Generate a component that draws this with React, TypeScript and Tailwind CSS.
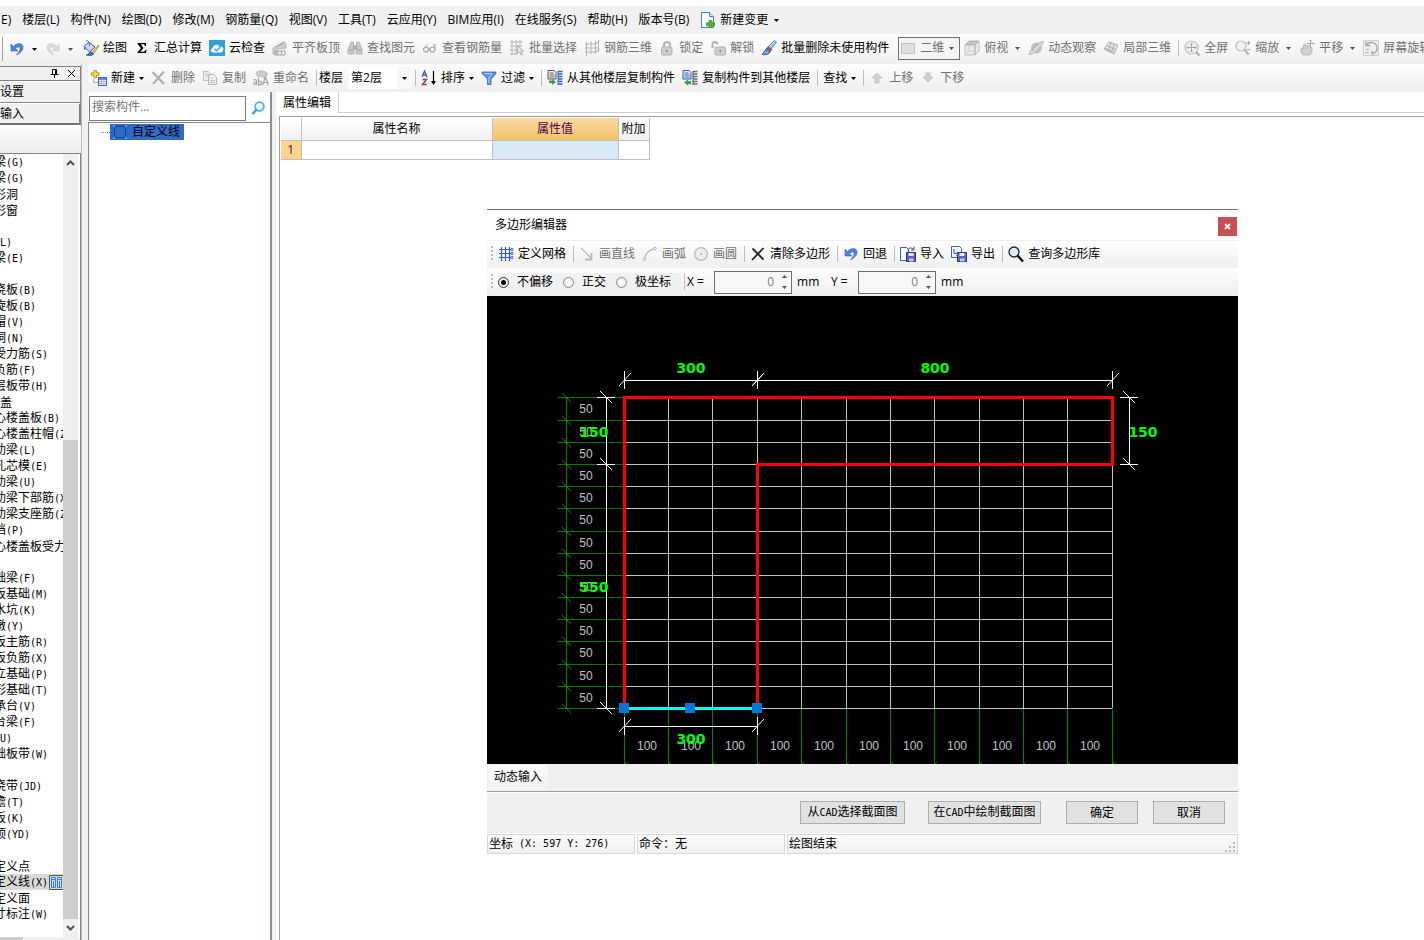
import type { ReactNode } from "react";

const UI = "font-['Open_Sans','Noto_Sans_CJK_SC',sans-serif]";

/* ---------- icons ---------- */

function Icon({ children, label }: { children: ReactNode; label?: string }) {
  return (
    <svg width="16" height="16" viewBox="0 0 16 16" fill="none" className="shrink-0" aria-hidden={!label} aria-label={label}>
      {children}
    </svg>
  );
}

function Caret({ off = false }: { off?: boolean }) {
  return (
    <svg width="5" height="3" viewBox="0 0 5 3" className="shrink-0" aria-hidden="true">
      <path d="M0 0h5L2.5 3z" fill={off ? "#505050" : "#000"} />
    </svg>
  );
}

const UndoIcon = ({ off = false }: { off?: boolean }) => (
  <Icon>
    <path d="M2 3v7h7L6.6 7.7C8.300 5.500 10.800 5.400 11 7.500c.2 2.400-1.700 4.300-3.500 6.200 4-1.600 6.800-4.500 6.500-8C13.500 1.800 8 1.500 4.500 5.400z" fill={off ? "#d4d4d4" : "#4f83dd"} stroke={off ? "#c4c4c4" : "#2f5fb8"} strokeWidth=".6" />
  </Icon>
);
const RedoIcon = () => (
  <Icon>
    <path d="M14 3v7H7l2.400-2.300C7.700 5.500 5.200 5.400 5 7.500c-.2 2.400 1.700 4.300 3.500 6.200C4.500 12.100 1.700 9.200 2 5.700 2.500 1.800 8 1.500 11.500 5.400z" fill="#dadada" stroke="#c6c6c6" strokeWidth=".6" />
  </Icon>
);
const BucketIcon = () => (
  <Icon>
    <path d="M1 6.500 6 2l6 5-5.500 5z" fill="#c9d8ec" stroke="#3c5f93" />
    <path d="M3 1c2-1 3.500 1 3.500 5" stroke="#46658f" />
    <path d="M1 7c-1 3 1 4 1.500 2L3 7z" fill="#4476b9" />
    <path d="m15.500 5-7 7.500 2 1.500 5-7z" fill="#e9c154" stroke="#9b7a24" strokeWidth=".6" />
    <path d="M8.500 12C6 12 6 14.500 3 15c3 1.200 7 .8 7.600-1.200z" fill="#2f6ec8" stroke="#1d498c" strokeWidth=".6" />
  </Icon>
);
const SigmaIcon = () => (
  <Icon>
    <path d="M3.500 3h8.500v3h-1c-.2-1.200-.7-1.700-2-1.700H6.700L9.500 8l-3.200 3.700h3c1.400 0 1.900-.6 2.200-1.900h1L12 13H3.500v-.8L6.900 8.200 3.500 3.800z" fill="#000" />
  </Icon>
);
const CloudIcon = () => (
  <Icon>
    <rect width="16" height="16" fill="#2ea0dc" />
    <path d="M4 12.500C1 12.500 1.200 8.500 3.700 8.300 4 4.500 9 3.500 10.300 6.700c3.400-.6 4.500 1.300 3.900 3.300-.4 1.700-1.400 2.500-3 2.500z" fill="#fff" />
    <path d="m5.500 8.800 2 2 4-4" stroke="#2ea0dc" strokeWidth="1.300" />
  </Icon>
);
const AlignTopIcon = () => (
  <Icon>
    <path d="M1 8 12 1.500 14 4v4L5 9v5H1z" fill="#d0d0d0" stroke="#ababab" strokeWidth=".8" />
    <path d="M3 15v-4h10v4zM6 11v4M9.500 11v4M4 7l8-4" stroke="#a4a4a4" />
  </Icon>
);
const BinocularsIcon = () => (
  <Icon>
    <path d="M4 2h2.500v3L7 14H1V9zM9.500 2H12l3 7v5H9L9.500 5z" fill="#c9c9c9" stroke="#a9a9a9" strokeWidth=".8" />
    <path d="M6.500 6h3v3h-3zM2 10h4M10 10h4" stroke="#9d9d9d" fill="#bbb" />
  </Icon>
);
const GlassesIcon = () => (
  <Icon>
    <circle cx="4" cy="9.500" r="2.500" stroke="#a2a2a2" strokeWidth="1.200" />
    <circle cx="10.500" cy="9.500" r="2.500" stroke="#a2a2a2" strokeWidth="1.200" />
    <path d="M6 9.300h2.500M2 8.500 5 5M13 9.500V4l-2 1.500" stroke="#a2a2a2" />
  </Icon>
);
const BatchSelectIcon = () => (
  <Icon>
    <path d="M1 2h13M1 6h12M1 10h7M1 14h7M3 0v15M7 0v15M11 0v6" stroke="#b8b8b8" />
    <path d="m8.500 5.500 6 5.500-2.500.3 1.500 3-1.300.7-1.500-3-2.200 1.500z" fill="#e6e6e6" stroke="#9f9f9f" strokeWidth=".8" />
  </Icon>
);
const RebarIcon = () => (
  <Icon>
    <path d="M1 4h11M1 8h14M1 12h12M2.500 2v14M7 1v13M11.500 1v13M14.500 0v12M11.500 4l4-3M11.500 12l4-3" stroke="#b3b3b3" />
  </Icon>
);
const LockIcon = ({ open = false }: { open?: boolean }) => (
  <Icon>
    <path d={open ? "M2.500 8V4.500c0-3.500 5-3.500 5 0" : "M5 8V5c0-4 6-4 6 0v3"} stroke="#b4b4b4" strokeWidth="2" />
    <rect x={open ? 5 : 2.500} y="7" width="10.500" height="8" rx="1.500" fill="#d0d0d0" stroke="#b0b0b0" />
    <path d={open ? "M10.300 9.500v3M9 11h2.600" : "M7.800 9.500v3M6.500 11h2.600"} stroke="#8d8d8d" />
  </Icon>
);
const BrushIcon = () => (
  <Icon>
    <rect width="16" height="16" fill="#fff" />
    <path d="M13.500.500 15.500 2 9.500 10 6.500 7.500z" fill="#9ed0f4" stroke="#386fae" strokeWidth=".8" />
    <path d="m7 6.500 4 3-1.500 2-4-3z" fill="#b85a55" stroke="#6d3133" strokeWidth=".5" />
    <path d="M5.500 8.500 1 14.500c4 1 7 .2 8.500-3z" fill="#3f7fd6" stroke="#264f92" strokeWidth=".7" />
    <path d="m3 13.500 3-3m-1 3.500 2.500-2.500" stroke="#c9e2ff" strokeWidth=".8" />
  </Icon>
);
const PlaneIcon = () => (
  <Icon>
    <rect x="1.500" y="3.500" width="13" height="10" fill="#dedede" stroke="#c3c3c3" />
  </Icon>
);
const CubeIcon = () => (
  <Icon>
    <path d="M1 5 5 1h10l-4 4z" fill="#c4c4c4" stroke="#a5a5a5" strokeWidth=".8" />
    <path d="M1 5h10v10H1zM11 5l4-4v10l-4 4z" fill="#e9e9e9" stroke="#b2b2b2" strokeWidth=".8" />
    <path d="M5 6v5h6M5 11l-3.500 3.500" stroke="#cfcfcf" />
  </Icon>
);
const OrbitIcon = () => (
  <Icon>
    <circle cx="8.500" cy="8" r="5.500" fill="#c2c2c2" />
    <path d="M1 14.500C1 10 11 1 15.500 1.500 15 6 5 15.500 1 14.500z" fill="#d9d9d9" stroke="#acacac" strokeWidth=".8" />
    <path d="M4 11c1-3 4-5.500 7-7" stroke="#9e9e9e" />
  </Icon>
);
const Local3dIcon = () => (
  <Icon>
    <path d="m1 9 5-7 9 3-4 9z" fill="#e2e2e2" stroke="#b0b0b0" />
    <path d="m3.500 5.500 9 4M8 3 5 12M11.500 4 8 13M2 8l9 4" stroke="#adadad" />
  </Icon>
);
const FullScreenIcon = () => (
  <Icon>
    <circle cx="7.500" cy="7.500" r="6.500" fill="#f1f1f1" stroke="#bcbcbc" strokeWidth="1.200" />
    <path d="M7.500 3v9M3 7.500h9M6 4.500l1.500-1.500L9 4.500M6 10.500 7.500 12 9 10.500M4.500 6 3 7.500 4.500 9M10.500 6 12 7.500 10.500 9" stroke="#a5a5a5" />
    <path d="m12 12 3.500 3.500" stroke="#aaa" strokeWidth="2" />
  </Icon>
);
const ZoomIcon = () => (
  <Icon>
    <circle cx="6" cy="6" r="5" fill="#f1f1f1" stroke="#bcbcbc" strokeWidth="1.200" />
    <path d="m9.500 9.500 4 5" stroke="#b4b4b4" strokeWidth="2.200" />
    <path d="M13.500 1v4M11.500 3h4M12 9.500h3.500" stroke="#a5a5a5" strokeWidth="1.200" />
  </Icon>
);
const PanIcon = () => (
  <Icon>
    <path d="M2 9c0-2 2-1 2.500-.5L4.500 5c0-1.500 2-1.500 2 0v1c2-1 6 0 6.500 2v4l-2 3H4l-2-3z" fill="#cfcfcf" stroke="#b1b1b1" strokeWidth=".8" />
    <path d="M11.500 0v7M8 3.500h7M10.500 1l1-1 1 1M14 2.500l1 1-1 1" stroke="#a9a9a9" />
  </Icon>
);
const RotateIcon = () => (
  <Icon>
    <rect x=".5" y=".5" width="15" height="15" fill="#eeeeee" stroke="#d0d0d0" />
    <path d="M3 5c3-4 10-3 11 2 .5 3.500-1.500 6-4 6.500M3 1.500V5.500h4" stroke="#a6a6a6" strokeWidth="1.400" />
    <path d="M8 12.500 10 15v-4zM3 9.500h3M2.500 12.500h3" stroke="#b3b3b3" fill="#b3b3b3" />
  </Icon>
);
const NewDocIcon = () => (
  <Icon>
    <path d="M1.500.500h8l4 4v11h-12z" fill="#fff" stroke="#3b86c6" />
    <path d="M9.500.500v4h4" fill="#cfe6f8" stroke="#3b86c6" />
    <path d="M9 8.500h3v2.300h2.500v3H12V16H9v-2.200H6.500v-3H9z" fill="#54b426" stroke="#2f8a10" strokeWidth=".7" />
  </Icon>
);
const NewIcon = () => (
  <Icon>
    <path d="M3 .500h2.500v2.300H8v2.500H5.500v2.400H3V5.300H.500V2.800H3z" fill="#f7df4b" stroke="#a58a17" strokeWidth=".8" />
    <rect x="7.500" y="7.500" width="8" height="8" fill="#fff" stroke="#3e68b0" />
    <path d="M8 8h7v2H8z" fill="#5b8de0" />
    <path d="M8 11.500h7M8 13.500h7M10.500 10v5M13 10v5" stroke="#9db9e6" />
    <path d="M2.500 9.500v3h4" stroke="#777" strokeDasharray="1 1" />
  </Icon>
);
const CrossIcon = ({ off = false }: { off?: boolean }) => (
  <Icon>
    <path d={off ? "M1.500 2 13 14M13 1.500 2 14" : "M2.500 2.500 13.500 13.500M13.500 2 2 14"} stroke={off ? "#b0b0b0" : "#222"} strokeWidth={off ? 2.2 : 1.8} />
  </Icon>
);
const CopyIcon = () => (
  <Icon>
    <path d="M1.500 1.500h5l2 2v7h-7z" fill="#eee" stroke="#bdbdbd" />
    <path d="M6.500 4.500h5l3 3v7h-8z" fill="#eee" stroke="#b4b4b4" />
    <path d="M8 8h3M8 10.500h5M8 12.500h5M3 4h3M3 6h3" stroke="#c4c4c4" />
  </Icon>
);
const RenameIcon = () => (
  <Icon>
    <path d="M3 3c3-3 9-3 12 1l-4 4-3-2-3 1z" fill="#cdcdcd" stroke="#b5b5b5" strokeWidth=".8" />
    <path d="M.500 10c2-1 3 0 3 1.500V15M3.500 12c-4 0-3.500 3 0 2.500M5.500 8v7c4 .8 4-5 0-3.500M9.500 15 12.500 7l3 8M10.500 12.500h4" stroke="#a2a2a2" strokeWidth="1.200" />
  </Icon>
);
const SortIcon = () => (
  <Icon>
    <path d="M1 7 3.500 1 6 7M2 5h3" stroke="#3c58b0" strokeWidth="1.300" />
    <path d="M1.500 9.500h4L1.500 14.500h4.300" stroke="#b03a3a" strokeWidth="1.500" />
    <path d="M12.500 1v12" stroke="#000" strokeWidth="1.200" />
    <path d="M10 11h5l-2.500 4z" fill="#000" />
  </Icon>
);
const FilterIcon = () => (
  <Icon>
    <path d="M1 2h14v1.500L10 9v5.500H6.500V9L1 3.500z" fill="#5d93e6" stroke="#2f62b8" strokeWidth=".8" />
    <path d="M3 3.500h8L8 8v5" stroke="#b9d4fa" />
  </Icon>
);
const FromFloorIcon = () => (
  <Icon>
    <path d="M1 .500h6l2 2V9H1z" fill="#ececec" stroke="#555" />
    <path d="M2.500 3h4M2.500 5h5M2.500 7h5" stroke="#666" />
    <path d="M11 1.500h4.500M11 4h4.500M11 6.500h4.500M11 9h4.500M11 11.500h4.500M11 14h4.500" stroke="#2f66bd" strokeWidth="1.500" />
    <path d="M11 1v14" stroke="#2f66bd" />
    <path d="M2 10.500v2.500h3v2l4-3-4-3v1.500z" fill="#31a548" />
  </Icon>
);
const ToFloorIcon = () => (
  <Icon>
    <path d="M1 .500h6l2 2V9H1z" fill="#e2ebfa" stroke="#2f55a8" />
    <path d="M2.500 3h4M2.500 5h5M2.500 7h5" stroke="#3765bb" />
    <path d="M11 1.500h4.500M11 4h4.500M11 6.500h4.500M11 9h4.500M11 11.500h4.500M11 14h4.500" stroke="#6a6f78" strokeWidth="1.500" />
    <path d="M11 1v14" stroke="#4c5058" />
    <path d="M9 14.500V11H6V9.500l-4 3 4 3V14z" fill="#31a548" />
  </Icon>
);
const ArrowIcon = ({ down = false }: { down?: boolean }) => (
  <Icon>
    <path d={down ? "M6 3h4v4h3l-5 5-5-5h3z" : "M6 13h4V8h3L8 3 3 8h3z"} fill="#cfcfcf" stroke="#b9b9b9" strokeWidth=".7" />
  </Icon>
);
const GridIcon = () => (
  <Icon>
    <path d="M1 3.500h12M1 7.500h12M1 11.500h12M3.500 1v14M7.500 1v14M11.500 1v14" stroke="#2f5fc0" strokeWidth="1.200" />
    <path d="M13 2.500h2v2h-2zM13 6.500h2v2h-2zM13 10.500h2v2h-2z" fill="#fff" stroke="#2f5fc0" strokeWidth=".8" />
  </Icon>
);
const LineIcon = () => (
  <Icon>
    <path d="m2 2 10 10" stroke="#b8b8b8" strokeWidth="1.300" />
    <path d="M12.500 7v6.500H6" stroke="#b8b8b8" strokeWidth="1.800" />
  </Icon>
);
const ArcIcon = () => (
  <Icon>
    <path d="M2.500 14C3 8 6 4 13 2.500" stroke="#b8b8b8" strokeWidth="1.300" />
    <circle cx="2.500" cy="13.500" r="1.300" fill="#fff" stroke="#b0b0b0" />
    <circle cx="13" cy="2.500" r="1.300" fill="#fff" stroke="#b0b0b0" />
  </Icon>
);
const CircleIcon = () => (
  <Icon>
    <circle cx="8" cy="8" r="6.300" fill="#eee" stroke="#b9b9b9" strokeWidth="1.300" />
    <circle cx="8" cy="8" r="1" fill="#aaa" />
  </Icon>
);
const Disk = ({ x, y }: { x: number; y: number }) => (
  <g transform={`translate(${x} ${y})`}>
    <path d="M.500.500h9v9h-9z" fill="#5b63c4" stroke="#2d3274" />
    <path d="M2.500 1h5v3h-5z" fill="#e6e9ff" />
    <path d="M3 6.500h4.500v3H3z" fill="#c3c7e8" />
  </g>
);
const ImportIcon = () => (
  <Icon>
    <path d="M.500 1.500h6l2 2v11h-8z" fill="#f5f9ff" stroke="#45639f" />
    <Disk x={6} y={6} />
    <path d="M8 5c0-3 3-4 5-2M11 4h3V.500" stroke="#444" />
  </Icon>
);
const ExportIcon = () => (
  <Icon>
    <path d="M.500.500h8l2 2v9h-10z" fill="#f1f5fd" stroke="#45639f" />
    <Disk x={6} y={6} />
    <path d="M3 3v4.500h4M5.500 5.500l2 2-2 2" stroke="#3c4f86" />
  </Icon>
);
const MagnifierIcon = () => (
  <Icon>
    <circle cx="6" cy="6" r="5" fill="#d6eef7" stroke="#222" strokeWidth="1.300" />
    <path d="m9.500 9.500 5.500 6" stroke="#111" strokeWidth="2.400" />
  </Icon>
);
const BlueMagnifierIcon = () => (
  <Icon label="搜索">
    <circle cx="9.500" cy="6.500" r="4.300" fill="#eaf6ff" stroke="#55aeec" strokeWidth="1.800" />
    <path d="M6.500 9.800 2.500 14" stroke="#3f95dd" strokeWidth="2.200" />
  </Icon>
);

/* ---------- controls ---------- */

function Tool({ icon, label, off = false, caret = false }: { icon?: ReactNode; label: string; off?: boolean; caret?: boolean }) {
  return (
    <button type="button" disabled={off} className={`mr-[7px] flex shrink-0 items-center gap-1 whitespace-nowrap ${off ? "text-[#707070]" : "text-black"}`}>
      {icon}
      <span>{label}</span>
      {caret && <Caret off={off} />}
    </button>
  );
}

function DropArrow({ label, off = false }: { label: string; off?: boolean }) {
  return (
    <button type="button" aria-label={label} className="mr-2 flex h-5 shrink-0 items-center">
      <Caret off={off} />
    </button>
  );
}

function Sep({ tight = false }: { tight?: boolean }) {
  return <span className={`h-4 w-px shrink-0 bg-[#bdbdbd] ${tight ? "mr-0.5" : "mr-[5px]"}`} />;
}

function Grip() {
  return <span className="mr-[5px] h-4 w-0.5 shrink-0 bg-[repeating-linear-gradient(to_bottom,#b8b8b8_0px,#b8b8b8_2px,transparent_2px,transparent_4px)]" />;
}

/** Fixed-pitch rendering: ideographs take two columns, Latin characters one. */
function Pitch({ text }: { text: string }) {
  return (
    <>
      {text.split(/([\x20-\x7e]+)/).map((part, i) =>
        i % 2 ? (
          <span key={i} className="whitespace-pre font-['DejaVu_Sans_Mono',monospace] text-[10px]">{part}</span>
        ) : (
          part
        )
      )}
    </>
  );
}

/* ---------- left navigation ---------- */

const TREE = [
  "梁(G)", "梁(G)", "形洞", "形窗", "", "(L)", "梁(E)", "", "浇板(B)", "旋板(B)", "帽(V)", "洞(N)",
  "受力筋(S)", "负筋(F)", "层板带(H)", "盖", "心楼盖板(B)", "心楼盖柱帽(Z)", "肋梁(L)", "孔芯模(E)",
  "肋梁(U)", "肋梁下部筋(X)", "肋梁支座筋(Z)", "档(P)", "心楼盖板受力筋", "", "础梁(F)", "板基础(M)",
  "水坑(K)", "墩(Y)", "板主筋(R)", "板负筋(X)", "立基础(P)", "形基础(T)", "承台(V)", "台梁(F)", "(U)",
  "础板带(W)", "", "浇带(JD)", "檐(T)", "板(K)", "顶(YD)", "", "定义点", "定义线(X)", "定义面", "寸标注(W)",
];

function Chevron({ down = false }: { down?: boolean }) {
  return (
    <svg width="9" height="6" viewBox="0 0 9 6" fill="none" aria-hidden="true">
      <path d={down ? "M1 1l3.500 3.500L8 1" : "M1 5l3.500-3.500L8 5"} stroke="#505050" strokeWidth="2" />
    </svg>
  );
}

function Navigator() {
  return (
    <aside className="flex w-[82px] shrink-0 flex-col overflow-hidden border-r border-[#b9b9b9] bg-[#f0f0f0] pt-0.5">
      <div className="flex h-[15px] shrink-0 items-center justify-end gap-2 border border-l-0 border-[#808080] pr-1">
        <button type="button" aria-label="固定">
          <svg width="9" height="9" viewBox="0 0 9 9" fill="none"><path d="M2.500 5V.500h4V5M5.500.500V5M.500 5.500h8M4.500 6v3" stroke="#000" /></svg>
        </button>
        <button type="button" aria-label="关闭">
          <svg width="9" height="9" viewBox="0 0 9 9" fill="none"><path d="M1 1l7 7M8 1 1 8" stroke="#000" /></svg>
        </button>
      </div>
      <button type="button" className="h-[22px] shrink-0 border-t border-r border-b border-t-white border-r-[#8a8a8a] border-b-[#8a8a8a] text-left">设置</button>
      <button type="button" className="h-[22px] shrink-0 border-t border-r-2 border-b-2 border-t-white border-r-[#808080] border-b-[#707070] text-left">输入</button>
      <div className="h-7 shrink-0 bg-linear-to-b from-[#fdfdfd] to-[#ececec]" />
      <div className="flex min-h-0 flex-1 flex-col border-t border-r border-[#828790] bg-white">
        <div className="flex min-h-0 flex-1">
          <ul className="min-w-0 flex-1 overflow-hidden font-['Noto_Sans_CJK_SC',sans-serif]">
            {TREE.map((t, i) => (
              <li key={i} className={`flex h-4 items-center whitespace-nowrap leading-4 ${t === "定义线(X)" ? "bg-[#d9d9d9]" : ""}`}>
                <span className={t === "盖" ? "" : "-ml-1.5"}><Pitch text={t} /></span>
                {t === "定义线(X)" && (
                  <svg width="14" height="15" viewBox="0 0 14 15" fill="none" className="ml-px shrink-0" aria-hidden="true">
                    <path d="M.500.500H14M.500.500v14H14" stroke="#555" />
                    <path d="M2.500 2.500h4v10h-4zM8.500 2.500h4v10h-4zM2.500 4.500h4M8.500 4.500h4M4.500 6v6M10.500 6v6" stroke="#2f86e0" />
                  </svg>
                )}
              </li>
            ))}
          </ul>
          <div className="mr-0.5 flex w-[15px] shrink-0 flex-col items-center bg-[#f0f0f0]">
            <div className="flex h-[18px] items-center"><Chevron /></div>
            <div className="flex w-full flex-1 flex-col pt-[268px]"><div className="flex-1 bg-[#cdcdcd]" /></div>
            <div className="flex h-[18px] items-center"><Chevron down /></div>
          </div>
        </div>
        <div className="flex h-[3px] shrink-0 bg-[#f0f0f0]"><div className="w-[23px] bg-[#cdcdcd]" /></div>
      </div>
    </aside>
  );
}

/* ---------- drawing canvas ---------- */

const GX = [137, 181, 225, 270, 314, 359, 403, 447, 492, 536, 580, 625];
const GY = [101, 124, 146, 168, 190, 212, 235, 257, 279, 301, 323, 345, 368, 390, 412];

function HDim({ x1, x2, y }: { x1: number; x2: number; y: number }) {
  return (
    <>
      <path d={`M${x1} ${y + 0.5}H${x2}M${x1 + 0.5} ${y - 9}v18M${x2 + 0.5} ${y - 9}v18`} stroke="#fff" shapeRendering="crispEdges" />
      <path d={`M${x1 - 5} ${y + 6}l12-13M${x2 - 5} ${y + 6}l12-13`} stroke="#fff" />
    </>
  );
}

function VDim({ y1, y2, x }: { y1: number; y2: number; x: number }) {
  return (
    <>
      <path d={`M${x + 0.5} ${y1}V${y2}M${x - 9} ${y1 + 0.5}h18M${x - 9} ${y2 + 0.5}h18`} stroke="#fff" shapeRendering="crispEdges" />
      <path d={`M${x - 6} ${y1 - 6}l12 12M${x - 6} ${y2 - 6}l12 12`} stroke="#fff" />
    </>
  );
}

function Drawing() {
  return (
    <svg viewBox="0 0 751 468" className="block w-full bg-black" aria-label="多边形截面">
      <g shapeRendering="crispEdges">
        {GX.map((x) => <path key={x} d={`M${x + 0.5} 101V412`} stroke="#c0c0c0" />)}
        {GY.map((y) => <path key={y} d={`M137 ${y + 0.5}H625`} stroke="#c0c0c0" />)}
        {GX.map((x) => <path key={x} d={`M${x + 0.5} 413V468`} stroke="#008000" />)}
        {GY.map((y) => <path key={y} d={`M71 ${y + 0.5}H136`} stroke="#008000" />)}
        <path d="M79.500 101V412" stroke="#008000" />
      </g>
      {GY.map((y) => <path key={y} d={`M75 ${y - 4}l9 9`} stroke="#008000" />)}
      {GX.map((x) => <path key={x} d={`M${x + 1} 468l2-2`} stroke="#008000" />)}
      <g fill="#c0c0c0" fontSize="12" fontFamily="Liberation Sans, sans-serif" textAnchor="middle">
        {GY.slice(1).map((y, i) => <text key={y} x="99" y={Math.floor((y + GY[i]) / 2) + 5}>50</text>)}
        {GX.slice(1).map((x, i) => <text key={x} x={Math.floor((x + GX[i]) / 2) + 1} y="454">100</text>)}
      </g>
      <HDim x1={137} x2={270} y={84} />
      <HDim x1={270} x2={625} y={84} />
      <HDim x1={137} x2={270} y={430} />
      <VDim x={119} y1={101} y2={168} />
      <VDim x={119} y1={168} y2={412} />
      <VDim x={642} y1={101} y2={168} />
      <g fill="#00ff00" fontSize="14" fontWeight="700" fontFamily="DejaVu Sans, sans-serif" textAnchor="middle">
        <text x="204" y="77">300</text>
        <text x="448" y="77">800</text>
        <text x="107" y="141">150</text>
        <text x="107" y="296">550</text>
        <text x="656" y="141">150</text>
        <text x="204" y="448">300</text>
      </g>
      <g shapeRendering="crispEdges">
        <path d="M137.500 412V101.500H625.500V168.500H270.500V412" fill="none" stroke="#ff0000" strokeWidth="3" />
        <path d="M137 412.500H271" stroke="#00ffff" strokeWidth="3" />
        {[132, 198, 265].map((x) => <rect key={x} x={x} y="407" width="10" height="10" fill="#0078d7" />)}
      </g>
    </svg>
  );
}

/* ---------- dialog ---------- */

function Spin({ id, label }: { id: string; label: string }) {
  return (
    <>
      <label htmlFor={id} className="mr-[7px] w-5 whitespace-nowrap">{label}</label>
      <div className="mr-[5px] flex h-[23px] w-[78px] items-center border border-[#707070] bg-[#f7f7f7]">
        <input id={id} defaultValue="0" className="min-w-0 flex-1 bg-transparent text-right text-[#808080] outline-none" />
        <div className="ml-2 mr-1 flex flex-col gap-2">
          <button type="button" aria-label={`${label} 增加`} className="block"><svg width="5" height="3" viewBox="0 0 5 3" className="block"><path d="M0 3h5L2.500 0z" fill="#555" /></svg></button>
          <button type="button" aria-label={`${label} 减少`} className="block"><svg width="5" height="3" viewBox="0 0 5 3" className="block"><path d="M0 0h5L2.500 3z" fill="#555" /></svg></button>
        </div>
      </div>
      <span className="mr-[11px] w-[23px]">mm</span>
    </>
  );
}

function PolygonDialog() {
  const bar = "bg-linear-to-b from-[#fdfdfd] to-[#efefef]";
  const cell = "flex h-5 items-center border border-[#d7d7d7] bg-linear-to-b from-[#fcfcfc] to-[#f0f0f0] pl-px";
  return (
    <div role="dialog" aria-label="多边形编辑器" className="absolute top-[209px] left-[487px] w-[751px] border-t border-[#6f7b84] bg-white">
      <div className="flex h-[31px] items-center justify-between border-b border-[#efefef] pr-px pl-2">
        <h2>多边形编辑器</h2>
        <button type="button" aria-label="关闭" className="mt-0.5 flex h-[19px] w-[19px] items-center justify-center bg-[#c75050]">
          <svg width="7" height="7" viewBox="0 0 7 7" fill="none"><path d="M1 1l5 5M6 1 1 6" stroke="#fff" strokeWidth="1.800" /></svg>
        </button>
      </div>
      <div className={`flex h-[27px] items-center pb-px pl-1 ${bar}`}>
        <Grip />
        <Tool icon={<GridIcon />} label="定义网格" />
        <Sep />
        <Tool icon={<LineIcon />} label="画直线" off />
        <Tool icon={<ArcIcon />} label="画弧" off />
        <Tool icon={<CircleIcon />} label="画圆" off />
        <Sep />
        <Tool icon={<CrossIcon />} label="清除多边形" />
        <Sep />
        <Tool icon={<UndoIcon />} label="回退" />
        <Sep />
        <Tool icon={<ImportIcon />} label="导入" />
        <Tool icon={<ExportIcon />} label="导出" />
        <Sep />
        <Tool icon={<MagnifierIcon />} label="查询多边形库" />
      </div>
      <div className={`flex h-7 items-center pl-1 ${bar}`}>
        <Grip />
        <div className="mr-[3px] flex h-[18px] items-center bg-[#f0f0f0] pr-2.5">
          {["不偏移", "正交", "极坐标"].map((t, i) => (
            <label key={t} className={`flex items-center gap-2 ${i < 2 ? "mr-2.5" : ""}`}>
              <input type="radio" name="offset" defaultChecked={i === 0} className="h-[11px] w-[11px] appearance-none rounded-full border border-[#8a8a8a] bg-white bg-clip-content p-0.5 checked:border-[#333] checked:bg-black" />
              {t}
            </label>
          ))}
        </div>
        <Sep tight />
        <Spin id="dx" label="X =" />
        <Spin id="dy" label="Y =" />
      </div>
      <Drawing />
      <div className="flex h-[27px] items-start bg-[#f0f0f0] pt-px pl-px">
        <button type="button" className="h-6 rounded-sm bg-linear-to-b from-[#fcfcfc] to-[#f2f2f2] px-1.5">动态输入</button>
      </div>
      <div className="flex h-[42px] items-center justify-end border-t border-[#a0a0a0] bg-[#f0f0f0] pr-[13px] shadow-[inset_0_1px_0_#fff]">
        <button type="button" className="mr-[23px] h-[23px] w-[105px] border border-[#adadad] bg-[#e1e1e1]"><Pitch text="从CAD选择截面图" /></button>
        <button type="button" className="mr-[25px] h-[23px] w-[113px] border border-[#adadad] bg-[#e1e1e1]"><Pitch text="在CAD中绘制截面图" /></button>
        <button type="button" className="mr-[15px] h-[23px] w-[72px] border border-[#adadad] bg-[#e1e1e1]">确定</button>
        <button type="button" className="h-[23px] w-[72px] border border-[#adadad] bg-[#e1e1e1]">取消</button>
      </div>
      <div className="flex gap-0.5 pt-px">
        <div className={`w-[148px] ${cell}`}><Pitch text="坐标 (X: 597 Y: 276)" /></div>
        <div className={`w-[148px] ${cell}`}>命令：无</div>
        <div className={`flex-1 justify-between ${cell}`}>
          绘图结束
          <svg width="12" height="12" viewBox="0 0 12 12" className="self-end" fill="#b8b8b8" aria-hidden="true"><path d="M8 1h2v2H8zM4 5h2v2H4zM8 5h2v2H8zM0 9h2v2H0zM4 9h2v2H4zM8 9h2v2H8z" /></svg>
        </div>
      </div>
    </div>
  );
}

/* ---------- page ---------- */

const MENU = ["楼层(L)", "构件(N)", "绘图(D)", "修改(M)", "钢筋量(Q)", "视图(V)", "工具(T)", "云应用(Y)", "BIM应用(I)", "在线服务(S)", "帮助(H)", "版本号(B)"];

export default function App() {
  const bar = "bg-linear-to-b from-[#fdfdfd] to-[#efefef]";
  return (
    <div className={`relative flex h-screen flex-col overflow-hidden bg-white text-[12px] leading-4 text-black ${UI}`}>
      <nav className="mt-1.5 flex h-7 shrink-0 items-center gap-[11px] whitespace-nowrap bg-[#f0f0f0] pl-px">
        <button type="button">E)</button>
        {MENU.map((m) => <button type="button" key={m}>{m}</button>)}
        <button type="button" className="flex items-center gap-1">
          <NewDocIcon />
          新建变更
          <span className="ml-0.5"><Caret /></span>
        </button>
      </nav>

      <div className="flex h-[30px] shrink-0 items-center overflow-hidden bg-[#f0f0f0]">
        <div className={`flex h-full shrink-0 items-center pl-0.5 ${bar}`}>
          <span className="mr-1.5 h-6 w-px bg-[#a0a0a0]" />
          <button type="button" aria-label="撤销" className="mr-[7px]"><UndoIcon /></button>
          <DropArrow label="撤销记录" />
          <button type="button" aria-label="恢复" className="mr-[7px]"><RedoIcon /></button>
          <DropArrow label="恢复记录" off />
        </div>
        <div className={`flex h-full min-w-0 flex-1 items-center pb-0.5 pl-0.5 ${bar}`}>
          <Tool icon={<BucketIcon />} label="绘图" />
          <Tool icon={<SigmaIcon />} label="汇总计算" />
          <Tool icon={<CloudIcon />} label="云检查" />
          <Tool icon={<AlignTopIcon />} label="平齐板顶" off />
          <Tool icon={<BinocularsIcon />} label="查找图元" off />
          <Tool icon={<GlassesIcon />} label="查看钢筋量" off />
          <Tool icon={<BatchSelectIcon />} label="批量选择" off />
          <Tool icon={<RebarIcon />} label="钢筋三维" off />
          <Tool icon={<LockIcon />} label="锁定" off />
          <Tool icon={<LockIcon open />} label="解锁" off />
          <Tool icon={<BrushIcon />} label="批量删除未使用构件" />
          <div className="mr-1 ml-0.5 flex h-[23px] w-[62px] shrink-0 items-center gap-1 border border-[#707070] bg-[#f4f4f4] px-px">
            <PlaneIcon />
            <select aria-label="视图模式" className="min-w-0 flex-1 appearance-none bg-transparent text-[#707070]">
              <option>二维</option>
            </select>
            <span className="mr-1 flex"><Caret off /></span>
          </div>
          <Tool icon={<CubeIcon />} label="俯视" off />
          <DropArrow label="俯视选项" off />
          <Tool icon={<OrbitIcon />} label="动态观察" off />
          <Tool icon={<Local3dIcon />} label="局部三维" off />
          <Sep />
          <Tool icon={<FullScreenIcon />} label="全屏" off />
          <Tool icon={<ZoomIcon />} label="缩放" off />
          <DropArrow label="缩放选项" off />
          <Tool icon={<PanIcon />} label="平移" off />
          <DropArrow label="平移选项" off />
          <Tool icon={<RotateIcon />} label="屏幕旋转" off />
        </div>
      </div>

      <div className="flex min-h-0 flex-1">
        <Navigator />
        <div className="flex min-w-0 flex-1 flex-col border-l-[6px] border-[#f0f0f0]">
          <div className={`flex h-7 shrink-0 items-center pl-[3px] ${bar}`}>
            <Tool icon={<NewIcon />} label="新建" caret />
            <Tool icon={<CrossIcon off />} label="删除" off />
            <Tool icon={<CopyIcon />} label="复制" off />
            <Tool icon={<RenameIcon />} label="重命名" off />
            <Sep tight />
            <label htmlFor="floor" className="mr-1.5 shrink-0">楼层</label>
            <div className="mr-1 flex h-[22px] w-[62px] shrink-0 items-center bg-white">
              <select id="floor" className="min-w-0 flex-1 appearance-none bg-transparent pl-0.5">
                <option>第2层</option>
              </select>
              <span className="flex h-full items-center bg-[#f7f7f7] px-1"><Caret /></span>
            </div>
            <Sep />
            <Tool icon={<SortIcon />} label="排序" caret />
            <Tool icon={<FilterIcon />} label="过滤" caret />
            <Sep />
            <Tool icon={<FromFloorIcon />} label="从其他楼层复制构件" />
            <Tool icon={<ToFloorIcon />} label="复制构件到其他楼层" />
            <Sep />
            <Tool label="查找" caret />
            <Sep />
            <Tool icon={<ArrowIcon />} label="上移" off />
            <Tool icon={<ArrowIcon down />} label="下移" off />
          </div>

          <div className="flex min-h-0 flex-1">
            <section className="flex w-[184px] shrink-0 flex-col border-r-2 border-[#8c9097] pt-1">
              <div className="flex h-[26px] shrink-0 items-start pl-px">
                <input aria-label="搜索构件" placeholder="搜索构件..." className="h-[25px] w-[157px] border border-[#7a7a7a] px-0.5 pb-1 outline-none placeholder:text-[#767676]" />
                <button type="button" className="mt-1 ml-1 bg-[#f4f9fd]"><BlueMagnifierIcon /></button>
              </div>
              <div className="flex-1 border-t border-l border-[#828790] pt-px">
                <div className="flex items-center pl-3">
                  <span className="w-[9px] border-t border-dotted border-[#808080]" />
                  <button type="button" className="flex h-4 items-center gap-1 bg-[#316ac5] pr-1 pl-0.5">
                    <Icon>
                      <path d="M2.500 2.500h11v11h-11z" stroke="#1446a8" />
                      <path d="M1 1h2v2H1zM13 1h2v2h-2zM1 13h2v2H1zM13 13h2v2h-2z" fill="#4f9bff" />
                    </Icon>
                    <span className="leading-4">自定义线</span>
                  </button>
                </div>
              </div>
            </section>

            <section className="flex min-w-0 flex-1 flex-col border-l-4 border-[#f0f0f0]">
              <div className="flex h-[21px] shrink-0">
                <button type="button" className="w-[63px] shrink-0 border-r border-[#d0d0d0]">属性编辑</button>
                <div className="flex-1 border-b border-[#d0d0d0]" />
              </div>
              <div className="mt-[3px] ml-[3px] flex-1 border-t border-l border-[#a0a0a0] pt-px pl-px">
                <table className="w-[368px] table-fixed border-collapse">
                  <colgroup><col className="w-5" /><col className="w-[191px]" /><col className="w-[126px]" /><col className="w-[31px]" /></colgroup>
                  <thead>
                    <tr className="h-[22px]">
                      <th className="border-r border-b border-[#c0c0c0] bg-linear-to-b from-white to-[#f0f0f0]" />
                      <th className="border-r border-b border-[#c0c0c0] bg-linear-to-b from-white to-[#f0f0f0] font-normal">属性名称</th>
                      <th className="border-r border-b border-[#c0c0c0] bg-linear-to-b from-[#fad9a0] to-[#f3c267] font-normal text-[#500050]">属性值</th>
                      <th className="whitespace-nowrap border-r border-b border-[#c0c0c0] bg-linear-to-b from-white to-[#f0f0f0] font-normal">附加</th>
                    </tr>
                  </thead>
                  <tbody>
                    <tr className="h-[19px]">
                      <th className="border-r border-b border-[#c0c0c0] bg-[#ffd58d] font-normal text-[#500050]">1</th>
                      <td className="border-r border-b border-[#c0c0c0]" />
                      <td className="border-r border-b border-[#c0c0c0] bg-[#d8e9f8]" />
                      <td className="border-r border-b border-[#c0c0c0]" />
                    </tr>
                  </tbody>
                </table>
              </div>
            </section>
          </div>
        </div>
      </div>

      <PolygonDialog />
    </div>
  );
}
